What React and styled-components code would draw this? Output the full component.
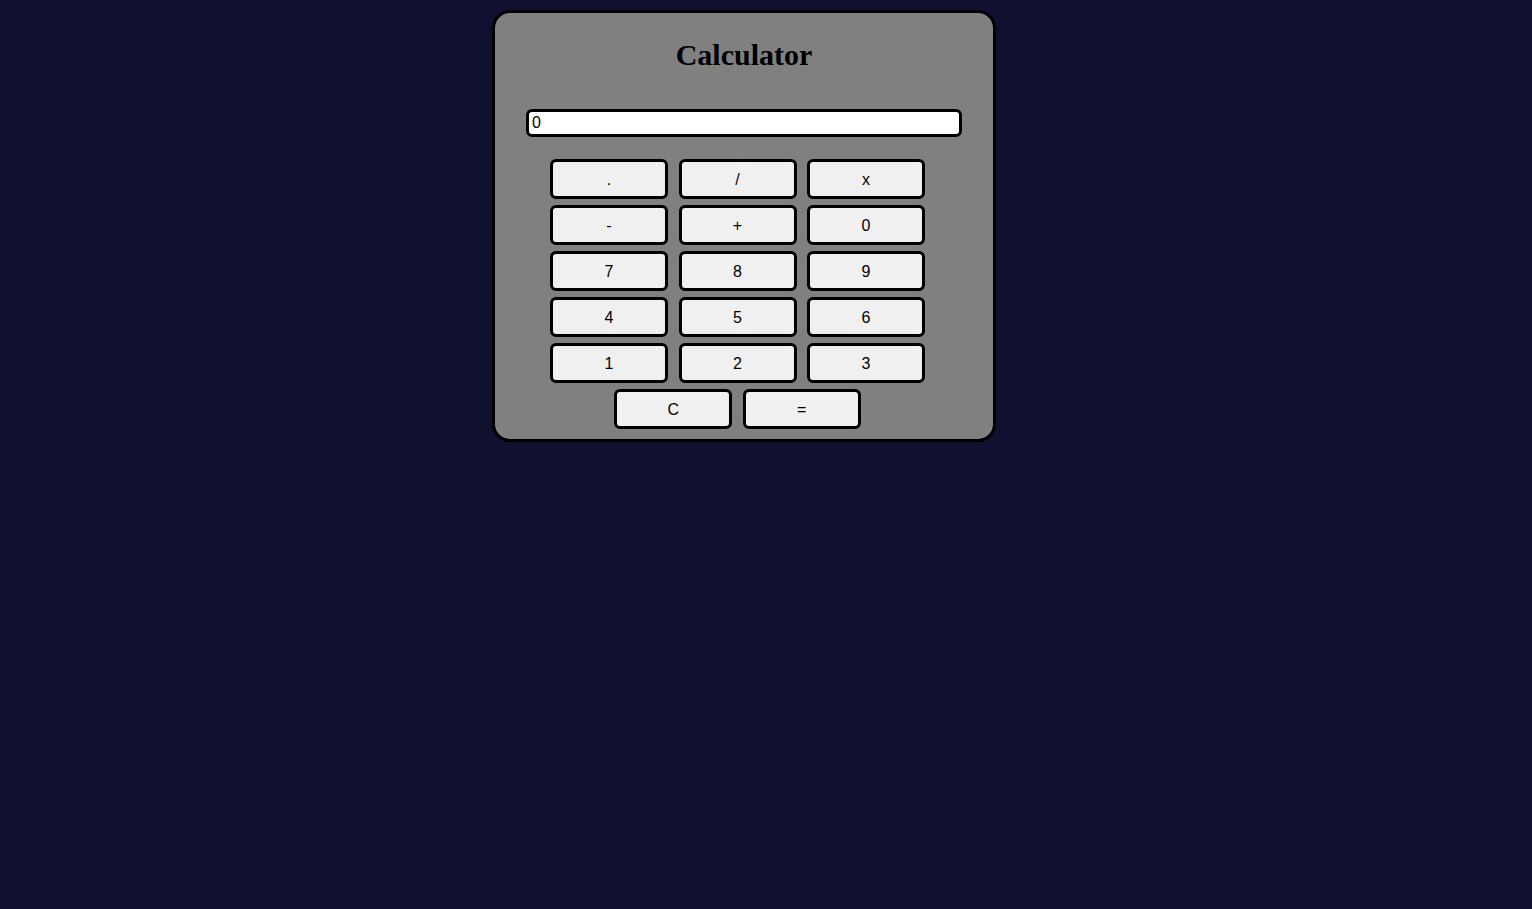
import React, { useState } from 'react';
import styled, { createGlobalStyle } from 'styled-components';

const GlobalStyle = createGlobalStyle`
  body {
    margin: 0;
    background-color: #111030;
    font-family: "Liberation Serif", "Times New Roman", serif;
  }
`;

const Page = styled.div`
  padding-top: 10px;
  padding-left: 492px;
  min-height: 909px;
  box-sizing: border-box;
`;

const Card = styled.div`
  width: 504px;
  box-sizing: border-box;
  background-color: #808080;
  border: 3px solid #000;
  border-radius: 18px;
  padding: 23px 31px 10px;
`;

const Title = styled.h1`
  margin: 0 0 36px;
  font-size: 30px;
  line-height: 37px;
  text-align: center;
  color: #000;
`;

const Display = styled.input`
  display: block;
  width: 100%;
  height: 28px;
  box-sizing: border-box;
  border: 3px solid #000;
  border-radius: 6px;
  background: #fff;
  padding: 0 3px;
  font-family: "Liberation Sans", Arial, sans-serif;
  font-size: 16px;
  color: #000;
  outline: none;
`;

const Keys = styled.div`
  margin-top: 22px;
  padding-right: 13px;
  display: flex;
  flex-direction: column;
  align-items: center;
  gap: 6px;
`;

const Row = styled.div`
  display: flex;
  gap: 10.5px;
`;

const Key = styled.button`
  width: 118px;
  height: 40px;
  box-sizing: border-box;
  border: 3px solid #000;
  border-radius: 6px;
  background: #f0f0f0;
  font-family: "Liberation Sans", Arial, sans-serif;
  font-size: 16px;
  color: #000;
  padding: 1px 0 0;
  cursor: pointer;
`;

const rows = [
  ['.', '/', 'x'],
  ['-', '+', '0'],
  ['7', '8', '9'],
  ['4', '5', '6'],
  ['1', '2', '3'],
  ['C', '='],
];

export default function App() {
  const [value, setValue] = useState('0');

  const press = (k) => {
    if (k === 'C') return setValue('0');
    if (k === '=') {
      try {
        const r = Function(`return (${value.replace(/x/g, '*')})`)();
        setValue(String(r));
      } catch (e) {
        setValue('Error');
      }
      return;
    }
    setValue((v) => (v === '0' || v === 'Error' ? k : v + k));
  };

  return (
    <Page>
      <GlobalStyle />
      <Card>
        <Title>Calculator</Title>
        <Display value={value} readOnly />
        <Keys>
          {rows.map((row, i) => (
            <Row key={i}>
              {row.map((k) => (
                <Key key={k} onClick={() => press(k)}>
                  {k}
                </Key>
              ))}
            </Row>
          ))}
        </Keys>
      </Card>
    </Page>
  );
}
